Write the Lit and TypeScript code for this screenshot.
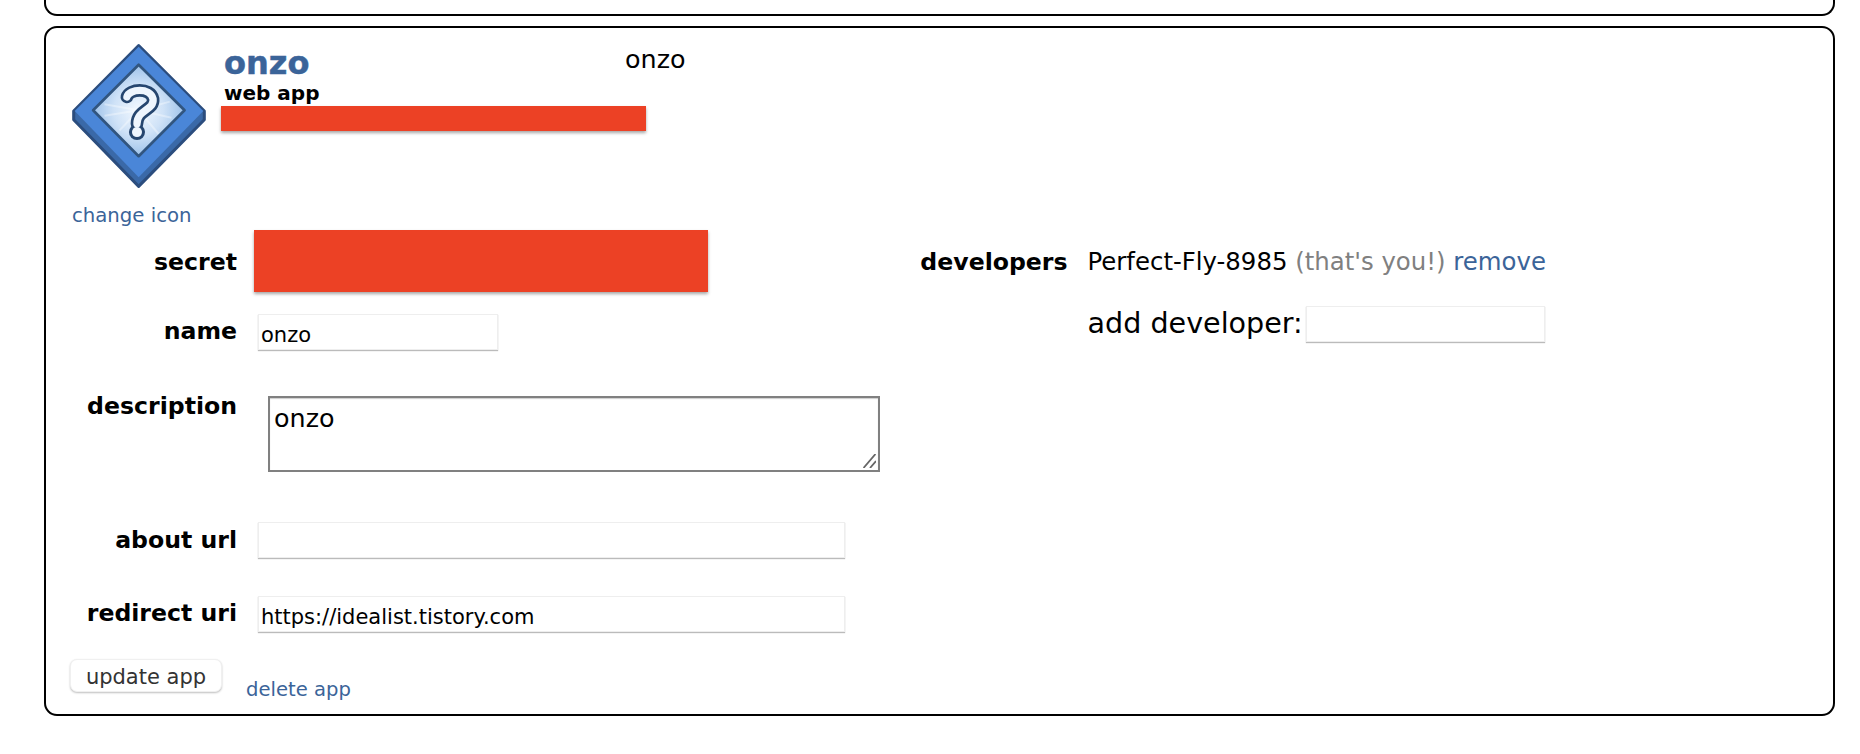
import { LitElement, css, html } from "lit";
import { customElement } from "lit/decorators.js";

@customElement("app-root")
export class AppRoot extends LitElement {
  static styles = css`
    :host {
      display: block;
      height: 754px;
      padding: 0 25px 0 44px;
      box-sizing: border-box;
      overflow: hidden;
      background: #fff;
      color: #000;
      font-family: "DejaVu Sans", Verdana, sans-serif;
    }
    * {
      box-sizing: border-box;
    }
    a {
      color: #3b6499;
      text-decoration: none;
    }
    .stub {
      height: 16px;
      border: 2px solid #000;
      border-top: none;
      border-radius: 0 0 13px 13px;
    }
    .card {
      margin-top: 10px;
      height: 690px;
      padding: 16px 0 0 26px;
      border: 2px solid #000;
      border-radius: 13px;
    }
    .head {
      display: flex;
      gap: 15px;
    }
    .icon {
      display: block;
      width: 134px;
      height: 144px;
      flex: none;
      filter: blur(0.7px);
    }
    .head-text {
      width: 425px;
    }
    .title-row {
      display: flex;
      align-items: flex-start;
      padding-left: 3px;
    }
    .title {
      width: 401px;
      flex: none;
      margin-top: 1px;
      font-size: 32px;
      line-height: 36px;
      font-weight: bold;
      color: #3b6499;
      -webkit-text-stroke: 0.5px #3b6499;
    }
    .app-name {
      flex: none;
      font-size: 25.4px;
      line-height: 30px;
    }
    .kind {
      padding-left: 3px;
      height: 22px;
      font-size: 20px;
      line-height: 24px;
      font-weight: bold;
    }
    .redact {
      background: #ec4125;
      box-shadow: 0 2px 3px rgba(0, 0, 0, 0.35);
    }
    .redact.small {
      height: 25px;
      margin-top: 3px;
    }
    .redact.big {
      width: 454px;
      height: 62px;
    }
    .change {
      display: block;
      margin-top: 16px;
      height: 23px;
      font-size: 19.7px;
      line-height: 24px;
    }
    .columns {
      display: flex;
      margin-top: 3px;
    }
    .left {
      width: 848px;
      flex: none;
    }
    .row {
      display: flex;
      align-items: flex-start;
    }
    .label {
      width: 165px;
      flex: none;
      text-align: right;
      font-size: 23.6px;
      line-height: 30px;
      font-weight: bold;
    }
    .field {
      display: block;
      height: 36px;
      margin: 0 0 0 21px;
      padding: 6px 2px 0;
      border: 1px solid #eee;
      border-radius: 0;
      outline: none;
      background: #fff;
      box-shadow: 0 1px 1px #bbb;
      color: #000;
      font-family: inherit;
      font-size: 21px;
    }
    .field.short {
      width: 240px;
    }
    .field.long {
      width: 587px;
    }
    .secret {
      margin-left: 17px;
    }
    .secret-row .label {
      padding-top: 17px;
    }
    .name-row {
      margin-top: 22px;
    }
    .name-row .label {
      padding-top: 2px;
    }
    .about-row .label {
      padding-top: 3px;
    }
    .redirect-row .label {
      padding-top: 2px;
    }
    .desc-row {
      margin-top: 40px;
    }
    .desc-row .label {
      padding-top: 1px;
    }
    .area-wrap {
      position: relative;
      width: 612px;
      height: 76px;
      margin: 6px 0 0 31px;
    }
    textarea {
      display: block;
      width: 100%;
      height: 100%;
      padding: 5px 4px 0;
      border: 2px solid #808080;
      border-radius: 0;
      outline: none;
      resize: none;
      background: #fff;
      box-shadow: inset 0 1px 1px rgba(0, 0, 0, 0.2);
      color: #000;
      font-family: inherit;
      font-size: 25.4px;
      line-height: 30px;
    }
    .grip {
      position: absolute;
      right: 4px;
      bottom: 4px;
      width: 13px;
      height: 14px;
    }
    .about-row {
      margin-top: 50px;
    }
    .redirect-row {
      margin-top: 38px;
    }
    .actions {
      display: flex;
      align-items: flex-start;
      gap: 24px;
      margin-top: 27px;
      margin-left: -2px;
    }
    button {
      width: 152px;
      height: 33px;
      padding: 2px 0 0;
      border: 1px solid #f0f0f0;
      border-radius: 7px;
      background: #fff;
      box-shadow: 0 1px 2px rgba(0, 0, 0, 0.25);
      color: #333;
      font-family: inherit;
      font-size: 21px;
    }
    .delete {
      margin-top: 18px;
      font-size: 19.6px;
      line-height: 26px;
    }
    .right {
      flex: 1;
    }
    .dev-row {
      display: flex;
      align-items: flex-start;
      gap: 20px;
      padding-top: 17px;
      font-size: 24.4px;
      line-height: 30px;
    }
    .dev-label {
      width: 147.5px;
      flex: none;
      font-size: 23.6px;
      text-align: right;
      font-weight: bold;
    }
    .muted {
      color: #808080;
    }
    .add-row {
      display: flex;
      align-items: flex-start;
      margin: 29px 0 0 167.5px;
      font-size: 28.6px;
      line-height: 34px;
    }
    .add-row .field {
      width: 239px;
      margin-left: 3.5px;
    }
  `;

  private renderIcon() {
    return html`
      <svg class="icon" viewBox="38 42 400 430" aria-hidden="true">
        <defs>
          <radialGradient id="glow" gradientUnits="userSpaceOnUse" cx="237" cy="240" r="135">
            <stop offset="0" stop-color="#f2f8ff" />
            <stop offset="0.55" stop-color="#cfe2f7" />
            <stop offset="1" stop-color="#9fc3ea" />
          </radialGradient>
        </defs>
        <path
          d="M237 47 L433 242 V268 L237 467 L43 268 V242 Z"
          fill="#3a69a8"
          stroke="#2b4d7e"
          stroke-width="9"
          stroke-linejoin="round"
        />
        <path d="M237 50 L430 242 L237 440 L46 242 Z" fill="#4a86d8" />
        <path
          d="M237 104 L374 240 L237 377 L101 240 Z"
          fill="url(#glow)"
          stroke="#31557f"
          stroke-width="8"
          stroke-linejoin="round"
        />
        <path
          d="M237 240 L135 222 M237 240 L135 256 M237 240 L330 214 M237 240 L335 262 M237 240 L296 310 M237 240 L180 300"
          stroke="#fff"
          stroke-opacity="0.35"
          stroke-width="6"
          fill="none"
        />
        <path
          d="M202 200 C208 176 272 170 280 206 C284 240 232 238 232 280"
          fill="none"
          stroke="#26466f"
          stroke-width="38"
          stroke-linecap="round"
        />
        <circle cx="232" cy="305" r="24" fill="#26466f" />
        <path
          d="M202 200 C208 176 272 170 280 206 C284 240 232 238 232 280"
          fill="none"
          stroke="#eef5fd"
          stroke-width="22"
          stroke-linecap="round"
        />
        <circle cx="232" cy="305" r="15" fill="#eef5fd" />
      </svg>
    `;
  }

  render() {
    return html`
      <div class="stub"></div>
      <section class="card">
        <div class="head">
          ${this.renderIcon()}
          <div class="head-text">
            <div class="title-row">
              <div class="title">onzo</div>
              <div class="app-name">onzo</div>
            </div>
            <div class="kind">web app</div>
            <div class="redact small"></div>
          </div>
        </div>
        <a class="change" href="#">change icon</a>
        <div class="columns">
          <div class="left">
            <div class="row secret-row">
              <div class="label">secret</div>
              <div class="redact big secret"></div>
            </div>
            <div class="row name-row">
              <div class="label">name</div>
              <input class="field short" .value=${"onzo"} />
            </div>
            <div class="row desc-row">
              <div class="label">description</div>
              <div class="area-wrap">
                <textarea .value=${"onzo"}></textarea>
                <svg class="grip" viewBox="0 0 13 14" aria-hidden="true">
                  <path d="M0.5 14 L12.5 0 M7 14 L13 7" stroke="#666" stroke-width="1.8" fill="none" />
                </svg>
              </div>
            </div>
            <div class="row about-row">
              <div class="label">about url</div>
              <input class="field long" />
            </div>
            <div class="row redirect-row">
              <div class="label">redirect uri</div>
              <input class="field long" .value=${"https://idealist.tistory.com"} />
            </div>
            <div class="actions">
              <button>update app</button>
              <a class="delete" href="#">delete app</a>
            </div>
          </div>
          <div class="right">
            <div class="dev-row">
              <div class="dev-label">developers</div>
              <div>
                Perfect-Fly-8985 <span class="muted">(that's you!)</span>
                <a href="#">remove</a>
              </div>
            </div>
            <div class="add-row">
              <span>add developer:</span>
              <input class="field" />
            </div>
          </div>
        </div>
      </section>
    `;
  }
}
